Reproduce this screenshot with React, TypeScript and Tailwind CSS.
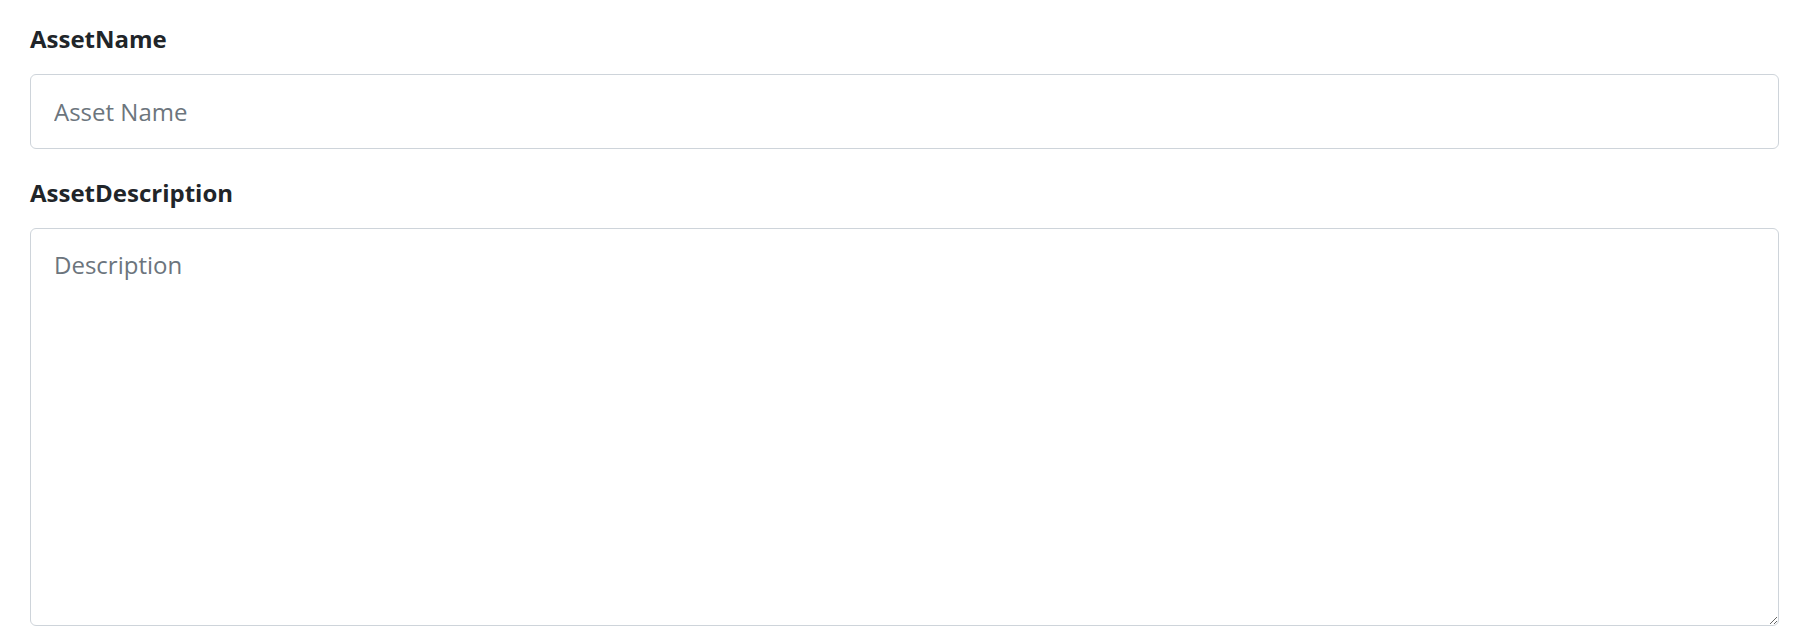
import React from 'react';

export default function App() {
  const [name, setName] = React.useState('');
  const [description, setDescription] = React.useState('');

  return (
    <div className="min-h-screen bg-white pl-[30px] pr-[31px] pt-[21px] font-['Open_Sans',sans-serif] text-[#212529]">
      <label className="block text-[24px] leading-[36px] font-bold">AssetName</label>
      <input
        className="mt-[17px] block h-[75px] w-full rounded-[6px] border border-[#ced4da] px-[23px] text-[24px] leading-[36px] outline-none placeholder:text-[#6c757d]"
        placeholder="Asset Name"
        value={name}
        onChange={(e) => setName(e.target.value)}
      />
      <label className="mt-[26px] block text-[24px] leading-[36px] font-bold">AssetDescription</label>
      <textarea
        className="mt-[17px] block h-[398px] w-full rounded-[6px] border border-[#ced4da] px-[23px] py-[18px] text-[24px] leading-[36px] outline-none placeholder:text-[#6c757d]"
        placeholder="Description"
        value={description}
        onChange={(e) => setDescription(e.target.value)}
      />
    </div>
  );
}
